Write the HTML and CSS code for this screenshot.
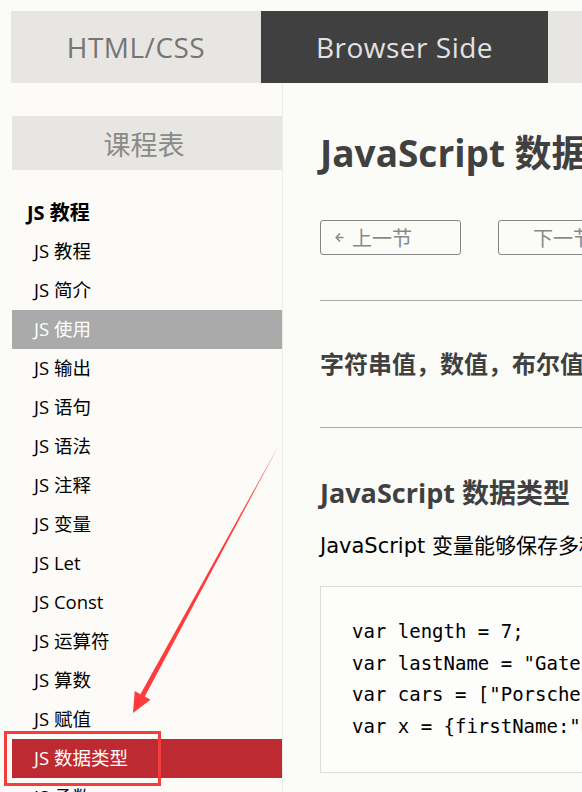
FILE: index.html
```html
<!DOCTYPE html>
<html lang="zh-CN">
<head>
<meta charset="utf-8">
<title>JavaScript 数据类型</title>
<link rel="stylesheet" href="styles.css">
</head>
<body>
<nav class="topnav">
  <a class="tab">HTML/CSS</a>
  <a class="tab active">Browser Side</a>
</nav>
<div class="layout">
  <aside class="sidebar">
    <div class="side-head">课程表</div>
    <h2 class="side-title">JS 教程</h2>
    <ul class="side-list">
      <li>JS 教程</li>
      <li>JS 简介</li>
      <li class="hover">JS 使用</li>
      <li>JS 输出</li>
      <li>JS 语句</li>
      <li>JS 语法</li>
      <li>JS 注释</li>
      <li>JS 变量</li>
      <li>JS Let</li>
      <li>JS Const</li>
      <li>JS 运算符</li>
      <li>JS 算数</li>
      <li>JS 赋值</li>
      <li class="current">JS 数据类型</li>
      <li>JS 函数</li>
    </ul>
  </aside>
  <main class="content">
    <h1 class="title">JavaScript 数据类型</h1>
    <div class="pager">
      <a class="btn prev"><svg class="arr" width="9" height="11" viewBox="0 0 9 11"><path d="M5 1.5 L1.2 5.5 L5 9.5 M1.2 5.5 H8.5" fill="none" stroke="#888" stroke-width="1.6"/></svg>上一节</a>
      <a class="btn next">下一节<svg class="arr" width="9" height="11" viewBox="0 0 9 11"><path d="M4 1.5 L7.8 5.5 L4 9.5 M7.8 5.5 H0.5" fill="none" stroke="#888" stroke-width="1.6"/></svg></a>
    </div>
    <hr class="rule">
    <p class="lead">字符串值，数值，布尔值，数组，对象。</p>
    <hr class="rule">
    <h2 class="subtitle">JavaScript 数据类型</h2>
    <p class="text">JavaScript 变量能够保存多种数据类型：数值、字符串值、数组、对象等等：</p>
    <pre class="code">var length = 7;
var lastName = "Gates";
var cars = ["Porsche", "Volvo", "BMW"];
var x = {firstName:"Bill", lastName:"Gates"};</pre>
  </main>
</div>
<svg class="annot" width="582" height="792" viewBox="0 0 582 792">
  <polygon points="279,445 144.8,696.6 150.5,699.7 133,713 134.7,691.1 140.4,694.2" fill="#ff3b3b"/>
  <rect x="5.5" y="732.5" width="154" height="52" fill="none" stroke="#f53d3d" stroke-width="3"/>
</svg>
</body>
</html>
```
FILE: styles.css
```css
html, body {
  margin: 0;
  padding: 0;
}
body {
  background: #fbfbf8;
  font-family: "Open Sans", "Noto Sans CJK SC", sans-serif;
  width: 582px;
  height: 792px;
  overflow: hidden;
  position: relative;
}
.topnav {
  display: flex;
  margin: 11px 0 0 11px;
  height: 72px;
  background: #e8e6e3;
}
.tab {
  display: flex;
  align-items: center;
  justify-content: center;
  width: 250px;
  font-size: 28px;
  letter-spacing: 0.5px;
  color: #757575;
  font-family: "Open Sans", sans-serif;
}
.tab.active {
  width: 287px;
  background: #404040;
  color: #e2e2e2;
}
.layout {
  display: flex;
  align-items: flex-start;
}
.sidebar {
  width: 270px;
  margin-left: 12px;
  padding-top: 33px;
  background: #fcfbf8;
  border-right: 1px solid #ebebe8;
  min-height: 800px;
}
.side-head {
  height: 54px;
  padding-right: 6px;
  background: #e8e6e3;
  color: #8a8a8a;
  font-size: 27px;
  display: flex;
  align-items: center;
  justify-content: center;
  font-family: "Noto Sans CJK SC", sans-serif;
}
.side-title {
  margin: 23px 0 0 0;
  padding-left: 15px;
  height: 39px;
  line-height: 39px;
  font-size: 20px;
  font-weight: bold;
  color: #000;
}
.side-list {
  list-style: none;
  margin: 0;
  padding: 0;
}
.side-list li {
  height: 39px;
  line-height: 38px;
  padding-left: 22px;
  font-size: 18.5px;
  color: #000;
}
.side-list li.hover {
  background: #aaaaaa;
  color: #fff;
}
.side-list li.current {
  background: #be2a31;
  color: #fff;
}
.content {
  flex: 1;
  padding-left: 37px;
  white-space: nowrap;
  overflow: hidden;
}
.title {
  margin: 47px 0 0 0;
  font-size: 37px;
  line-height: 46px;
  font-weight: bold;
  color: #404040;
}
.pager {
  display: flex;
  gap: 37px;
  margin-top: 44px;
}
.btn {
  flex-shrink: 0;
  box-sizing: border-box;
  width: 141px;
  height: 35px;
  border: 1.5px solid #858585;
  border-radius: 3px;
  color: #888;
  font-size: 20px;
  padding: 0 14px;
  display: flex;
  align-items: center;
  gap: 8px;
  font-family: "Noto Sans CJK SC", sans-serif;
}
.btn.next {
  padding-left: 34px;
}
.rule {
  margin: 45px 0 0 0;
  border: 0;
  border-top: 1px solid #aaaaaa;
  height: 0;
}
.lead {
  margin: 44px 0 0 0;
  font-size: 24px;
  line-height: 36px;
  font-weight: bold;
  color: #404040;
  font-family: "Noto Sans CJK SC", sans-serif;
}
.lead + .rule {
  margin-top: 46px;
}
.subtitle {
  margin: 47px 0 0 0;
  font-size: 27px;
  line-height: 36px;
  font-weight: bold;
  color: #404040;
}
.text {
  margin: 21px 0 0 0;
  font-size: 21px;
  line-height: 28px;
  color: #000;
  font-family: "DejaVu Sans", "Noto Sans CJK SC", sans-serif;
}
.code {
  margin: 26px 0 0 0;
  padding: 29px 0 30px 31px;
  border: 1px solid #dcdcdc;
  border-right: 0;
  background: #fdfdfb;
  font-family: "DejaVu Sans Mono", monospace;
  font-size: 19px;
  line-height: 31.6px;
  color: #000;
}
.annot {
  position: absolute;
  left: 0;
  top: 0;
  pointer-events: none;
}
```
